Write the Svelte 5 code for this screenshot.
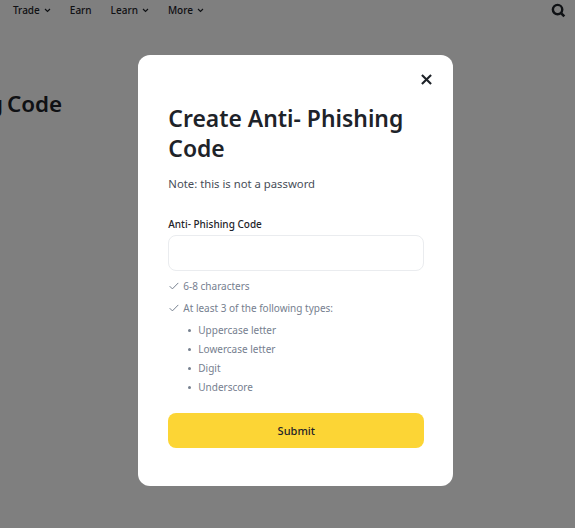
<script>
  const nav = [
    { label: 'Trade', caret: true },
    { label: 'Earn', caret: false },
    { label: 'Learn', caret: true },
    { label: 'More', caret: true }
  ];
  const types = ['Uppercase letter', 'Lowercase letter', 'Digit', 'Underscore'];
</script>

<div class="page">
  <header class="nav">
    <div class="links">
      {#each nav as item}
        <span class="link">
          {item.label}
          {#if item.caret}
            <svg class="caret" viewBox="0 0 8 6" width="7" height="5"><path d="M1 1.2 4 4.2 7 1.2" fill="none" stroke="currentColor" stroke-width="1.4"/></svg>
          {/if}
        </span>
      {/each}
    </div>
    <svg class="search" viewBox="0 0 16 16" width="15" height="15"><circle cx="7" cy="7" r="5" fill="none" stroke="currentColor" stroke-width="2.6"/><path d="M11 11 14.2 14.2" stroke="currentColor" stroke-width="2.8"/></svg>
  </header>
  <h2 class="behind">Anti- Phishing Code</h2>
</div>

<div class="overlay">
  <div class="modal" role="dialog">
    <button class="close" aria-label="Close">
      <svg viewBox="0 0 12 12" width="11" height="11"><path d="M1 1 11 11M11 1 1 11" stroke="currentColor" stroke-width="2.3"/></svg>
    </button>
    <h1>Create Anti- Phishing Code</h1>
    <p class="note">Note: this is not a password</p>
    <label class="label" for="code">Anti- Phishing Code</label>
    <input id="code" class="input" />
    <div class="rule">
      <svg viewBox="0 0 10 8" width="10" height="8"><path d="M.7 4.2 3.4 6.9 9.3.9" fill="none" stroke="currentColor" stroke-width="1"/></svg>
      6-8 characters
    </div>
    <div class="rule">
      <svg viewBox="0 0 10 8" width="10" height="8"><path d="M.7 4.2 3.4 6.9 9.3.9" fill="none" stroke="currentColor" stroke-width="1"/></svg>
      At least 3 of the following types:
    </div>
    <ul>
      {#each types as t}
        <li>{t}</li>
      {/each}
    </ul>
    <button class="submit">Submit</button>
  </div>
</div>

<style>
  :global(body) {
    margin: 0;
    background: #fff;
    font-family: "Noto Sans", "Liberation Sans", sans-serif;
    color: #1e2329;
  }
  .page {
    height: 528px;
    overflow: hidden;
    width: 575px;
  }
  .nav {
    display: flex;
    justify-content: space-between;
    align-items: center;
    height: 20px;
    padding: 0 9px 0 13px;
  }
  .links {
    display: flex;
    gap: 19px;
  }
  .link {
    display: flex;
    align-items: center;
    gap: 4px;
    font-size: 10px;
    line-height: 20px;
    font-weight: 500;
  }
  .behind {
    margin: 72px 0 0 -147px;
    font-size: 22.4px;
    line-height: 24px;
    font-weight: 600;
    white-space: nowrap;
    word-spacing: -2px;
  }
  .overlay {
    position: fixed;
    inset: 0;
    background: rgba(0, 0, 0, 0.5);
    display: flex;
    justify-content: center;
    align-items: flex-start;
    padding: 55px 0 0 16.6px;
    box-sizing: border-box;
  }
  .modal {
    position: relative;
    width: 315px;
    height: 431px;
    box-sizing: border-box;
    background: #fff;
    border-radius: 12px;
    padding: 49px 29px 0 30px;
    display: flex;
    flex-direction: column;
  }
  .close {
    position: absolute;
    top: 19px;
    right: 21px;
    padding: 0;
    border: 0;
    background: none;
    color: #1e2329;
    display: flex;
  }
  h1 {
    margin: 0;
    font-size: 22.9px;
    line-height: 30px;
    font-weight: 600;
  }
  .note {
    margin: 11px 0 0;
    font-size: 11.3px;
    line-height: 18px;
    color: #474d57;
  }
  .label {
    margin-top: 23px;
    font-size: 10px;
    line-height: 16px;
    font-weight: 500;
  }
  .input {
    margin-top: 3px;
    height: 35.5px;
    box-sizing: border-box;
    border: 1px solid #eaecef;
    border-radius: 8px;
    background: #fff;
    width: 100%;
  }
  .rule {
    display: flex;
    align-items: center;
    gap: 4px;
    padding-left: 1px;
    font-size: 10px;
    line-height: 14px;
    color: #76808f;
    margin-top: 8px;
  }
  ul {
    list-style: none;
    margin: 8px 0 0;
    padding: 0 0 0 20px;
    display: flex;
    flex-direction: column;
    gap: 5.3px;
  }
  li {
    position: relative;
    padding-left: 10px;
    font-size: 10px;
    line-height: 14px;
    color: #76808f;
  }
  li::before {
    content: "";
    position: absolute;
    left: 0;
    top: 6px;
    width: 3px;
    height: 3px;
    border-radius: 50%;
    background: #76808f;
  }
  .submit {
    margin-top: 18.5px;
    height: 35px;
    border: 0;
    border-radius: 8px;
    background: #fcd535;
    color: #1e2329;
    font: 500 11px "Noto Sans", sans-serif;
  }
</style>
